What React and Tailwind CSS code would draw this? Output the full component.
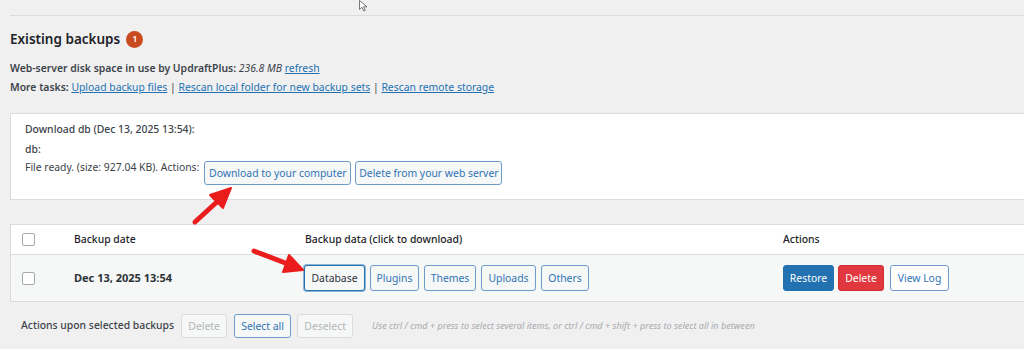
import React from "react";

function Btn({ children, className = "" }) {
  return (
    <span
      className={`inline-flex h-[24px] items-center whitespace-nowrap rounded-[3px] border px-[4px] text-[10.4px] leading-none ${className}`}
    >
      {children}
    </span>
  );
}

function Checkbox() {
  return <span className="block h-[13px] w-[13px] rounded-[2px] border border-[#a7aaad] bg-white" />;
}

const secondary = "border-[#6d9ccb] bg-[#f6f7f7] text-[#2f74b5]";
const disabled = "border-[#dcdcde] bg-[#f6f7f7] text-[#b4b6b9]";

export default function App() {
  return (
    <div className="relative h-[349px] w-[1024px] overflow-hidden bg-[#f0f0f1] font-['Noto_Sans',sans-serif] text-[#3c434a]">
      <div className="w-[1044px] pl-[10px] pt-[15px]">
        <div className="border-t border-[#dcdcde]" />

        <h2 className="mt-[13px] flex h-[20px] items-center gap-[6px] text-[13.5px] font-semibold text-[#1d2327]">
          Existing backups
          <span className="flex h-[17px] w-[17px] items-center justify-center rounded-full bg-[#ca4a1f] text-[9px] font-semibold text-white">
            1
          </span>
        </h2>

        <div className="mt-[10px] text-[10.4px] leading-[19px]">
          <p>
            <span className="font-semibold">Web-server disk space in use by UpdraftPlus:</span>{" "}
            <em>236.8 MB</em>{" "}
            <a className="text-[#2271b1] underline">refresh</a>
          </p>
          <p>
            <span className="font-semibold">More tasks:</span>{" "}
            <a className="text-[#2271b1] underline">Upload backup files</a> |{" "}
            <a className="text-[#2271b1] underline">Rescan local folder for new backup sets</a> |{" "}
            <a className="text-[#2271b1] underline">Rescan remote storage</a>
          </p>
        </div>

        {/* download box */}
        <div className="mt-[16px] border border-[#dcdcde] bg-white pb-[14px] pl-[14px] pt-[5px] text-[10.4px]">
          <p className="leading-[20px] font-medium">Download db (Dec 13, 2025 13:54):</p>
          <p className="leading-[20px] font-medium">db:</p>
          <div className="flex items-start gap-[5px]">
            <span className="leading-[16px]">File ready. (size: 927.04 KB). Actions:</span>
            <div className="mt-[2px] flex gap-[4px]">
              <Btn className={`w-[147px] justify-center ${secondary}`}>Download to your computer</Btn>
              <Btn className={`w-[147px] justify-center ${secondary}`}>Delete from your web server</Btn>
            </div>
          </div>
        </div>

        {/* backups table */}
        <div className="mt-[24px] border border-[#dcdcde] text-[10.4px]">
          <div className="flex h-[29px] items-center bg-white font-medium text-[#1d2327]">
            <div className="w-[63px] pl-[11px]">
              <Checkbox />
            </div>
            <div className="w-[231px]">Backup date</div>
            <div className="w-[478px]">Backup data (click to download)</div>
            <div>Actions</div>
          </div>
          <div className="flex h-[47px] items-center border-t border-[#dcdcde] bg-[#f6f7f7]">
            <div className="w-[63px] pl-[11px]">
              <Checkbox />
            </div>
            <div className="w-[230px] text-[11px] font-bold text-[#2c3338]">Dec 13, 2025 13:54</div>
            <div className="flex w-[479px] gap-[5px]">
              <Btn className="h-[26px] w-[61px] justify-center border-[#2271b1] bg-[#f6f7f7] text-[#2c3338] shadow-[0_0_0_1px_#8fb3d8]">
                Database
              </Btn>
              <Btn className={`h-[26px] w-[49px] justify-center ${secondary}`}>Plugins</Btn>
              <Btn className={`h-[26px] w-[52px] justify-center ${secondary}`}>Themes</Btn>
              <Btn className={`h-[26px] w-[55px] justify-center ${secondary}`}>Uploads</Btn>
              <Btn className={`h-[26px] w-[48px] justify-center ${secondary}`}>Others</Btn>
            </div>
            <div className="flex gap-[4px]">
              <Btn className="h-[26px] w-[51px] justify-center border-[#2271b1] bg-[#2271b1] text-white">Restore</Btn>
              <Btn className="h-[26px] w-[46px] justify-center border-[#d22d33] bg-[#e0383e] text-white">Delete</Btn>
              <Btn className={`ml-[2px] h-[26px] w-[59px] justify-center bg-white ${secondary}`}>View Log</Btn>
            </div>
          </div>
        </div>

        {/* bulk actions */}
        <div className="mt-[12px] flex items-center pl-[11px] text-[10.4px]">
          <span className="mr-[7px] font-medium">Actions upon selected backups</span>
          <Btn className={`w-[46px] justify-center ${disabled}`}>Delete</Btn>
          <Btn className={`ml-[7px] w-[57px] justify-center ${secondary}`}>Select all</Btn>
          <Btn className={`ml-[6px] w-[56px] justify-center ${disabled}`}>Deselect</Btn>
          <em className="ml-[19px] text-[9.1px] text-[#a7aaad]">
            Use ctrl / cmd + press to select several items, or ctrl / cmd + shift + press to select all in between
          </em>
        </div>
      </div>

      {/* annotation arrows */}
      <svg className="pointer-events-none absolute left-0 top-0" width="1024" height="349">
        <g fill="#ea1c1c" stroke="#ea1c1c" strokeLinecap="round" strokeLinejoin="round">
          <line x1="195" y1="222" x2="219" y2="200" strokeWidth="5" />
          <polygon points="231,188 210,195 223,208" strokeWidth="2" />
          <line x1="254" y1="251" x2="288" y2="264" strokeWidth="5" />
          <polygon points="303,270 289,255 283,272" strokeWidth="2" />
        </g>
      </svg>

      {/* mouse cursor */}
      <svg className="pointer-events-none absolute left-[359px] top-0" width="10" height="12" viewBox="0 0 10 12">
        <path d="M0.5 0.5 L0.5 9.5 L3 7.3 L4.8 11 L6.3 10.3 L4.6 6.8 L8 6.8 Z" fill="white" stroke="#555" strokeWidth="0.8" />
      </svg>
    </div>
  );
}
